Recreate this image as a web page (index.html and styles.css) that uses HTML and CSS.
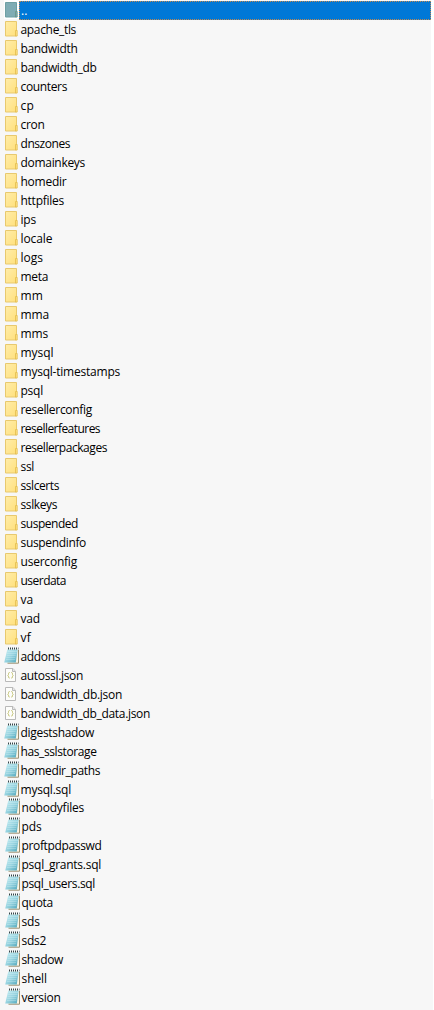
FILE: index.html
```html
<!DOCTYPE html>
<html lang="en">
<head>
<meta charset="utf-8">
<title>File list</title>
<link rel="stylesheet" href="styles.css">
</head>
<body>
<svg width="0" height="0" class="defs" aria-hidden="true">
  <defs>
    <linearGradient id="fold" x1="0" y1="0" x2="1" y2="1"><stop offset="0" stop-color="#ffedaa"/><stop offset="1" stop-color="#ffe07c"/></linearGradient>
    <linearGradient id="page" x1="0" y1="0" x2="1" y2="1"><stop offset="0" stop-color="#c8eef4"/><stop offset=".5" stop-color="#98d4e0"/><stop offset="1" stop-color="#4fa6bb"/></linearGradient>
    <symbol id="folder" viewBox="0 0 16 19">
      <path d="M1.500 2.500h11v14.500h-11z" fill="url(#fold)" stroke="#e8c96e"/>
      <path d="M11.500 17v-5.500h1.700v5.500z" fill="#ffe48b" stroke="#e3bd4b" stroke-width=".8"/>
    </symbol>
    <symbol id="up" viewBox="0 0 16 19">
      <path d="M1.500 2.500h11v14.500h-11z" fill="#7facb4" stroke="#6e9fa3"/>
      <path d="M11.500 17v-5.500h1.700v5.500z" fill="#7facb4" stroke="#649386" stroke-width=".8"/>
    </symbol>
    <symbol id="note" viewBox="0 0 16 19">
      <path d="M4 3.500h10.500v13.500H3z" fill="#fbf6e6"/>
      <path d="M14.500 4v13.200H3.500" fill="none" stroke="#9c8f70"/>
      <path d="M3.300 3.500h10.400l-1.900 13H.2z" fill="url(#page)"/>
      <path d="M3.500 5.500h9.500M3 7.500h9.500M2.700 9.500h9M2.300 11.500h9M2 13.500h9" stroke="#def5f8" stroke-width=".5" opacity=".6"/>
      <path d="M4 2.500h10.500" stroke="#35464b" stroke-width="2" stroke-dasharray="1 1"/>
    </symbol>
    <symbol id="json" viewBox="0 0 16 19">
      <path d="M1.500 3.500h7.500l2.500 3v10h-10z" fill="#fdfdfb" stroke="#b9b9b9"/>
      <path d="M8.500 3.500v3h3" fill="#e8e8e8" stroke="#b9b9b9"/>
      <path d="M5.700 7.500q-1.200 0-1.200 1.200v.8l-.7.800.7.800v.8q0 1.200 1.200 1.200M7.300 7.500q1.200 0 1.200 1.200v.8l.7.800-.7.800v.8q0 1.200-1.200 1.200" fill="none" stroke="#bcbc68" stroke-width=".9"/>
    </symbol>
  </defs>
</svg>
<main class="pane">
  <ul class="list upper" id="upper"></ul>
  <ul class="list lower" id="lower"></ul>
</main>
<script src="list.js"></script>
</body>
</html>
```
FILE: styles.css
```css
body {
  margin: 0;
  background: #fff;
  color: #000;
  font: 12px/19px "Open Sans", "Noto Sans", sans-serif;
}
.defs { display: block; }
.pane { height: 1010px; overflow: hidden; }
.list { margin: 0; padding: 0; list-style: none; background: #f7f7f7; }
.upper { width: 431px; height: 799px; padding-top: 1px; box-sizing: border-box; }
.lower { width: 433px; height: 211px; }
.row { display: flex; height: 19px; padding-left: 4px; }
.lower .row { padding-left: 5px; }
.icon { flex: none; width: 16px; height: 19px; margin-top: -1px; }
.lower .icon { margin-top: -2px; }
.name { height: 19px; padding-left: .5px; white-space: pre; }
.upper .name { line-height: 20px; }
.lower .name { line-height: 18px; }
.selected .name {
  flex: 1;
  box-sizing: border-box;
  margin-left: -1px;
  padding-left: 1px;
  line-height: 18px;
  color: #fff;
  background: #0078d7;
  border: 1px dotted #c08850;
}
.selected .icon { background: #fff; }
```
FILE: list.js
```js
// Each entry is a file name and the width of its label in pixels.
const groups = {
  upper: [
    ["up", "..", 0],
    ...Object.entries({
      apache_tls: 56, bandwidth: 57.5, bandwidth_db: 76.5, counters: 47, cp: 14, cron: 24.5,
      dnszones: 50, domainkeys: 65, homedir: 46.5, httpfiles: 44, ips: 16, locale: 32.5,
      logs: 23, meta: 28, mm: 23, mma: 29, mms: 28, mysql: 33.5, "mysql-timestamps": 100,
      psql: 23, resellerconfig: 72, resellerfeatures: 80, resellerpackages: 87, ssl: 14,
      sslcerts: 39, sslkeys: 37, suspended: 58, suspendinfo: 66, userconfig: 57,
      userdata: 46, va: 13, vad: 20, vf: 11
    }).map(([n, w]) => ["folder", n, w]),
    ["note", "addons", 40],
    ["json", "autossl.json", 63], ["json", "bandwidth_db.json", 102], ["json", "bandwidth_db_data.json", 130],
    ["note", "digestshadow", 74], ["note", "has_sslstorage", 76.5],
    ["note", "homedir_paths", 80], ["note", "mysql.sql", 51]
  ],
  lower: Object.entries({
    nobodyfiles: 63, pds: 20.5, proftpdpasswd: 80.5, "psql_grants.sql": 80, "psql_users.sql": 74,
    quota: 32, sds: 19, sds2: 25, shadow: 42, shell: 26, version: 39.5
  }).map(([n, w]) => ["note", n, w])
};
for (const [id, rows] of Object.entries(groups)) {
  const list = document.getElementById(id);
  list.innerHTML = rows.map(([icon, name]) =>
    `<li class="row${icon === "up" ? " selected" : ""}"><svg class="icon"><use href="#${icon}"/></svg><span class="name">${name}</span></li>`).join("");
  list.querySelectorAll(".name").forEach((el, i) => {
    const width = rows[i][2];
    if (width) {
      const spacing = (width - el.getBoundingClientRect().width) / rows[i][1].length;
      el.style.letterSpacing = spacing.toFixed(3) + "px";
    }
  });
}
```
